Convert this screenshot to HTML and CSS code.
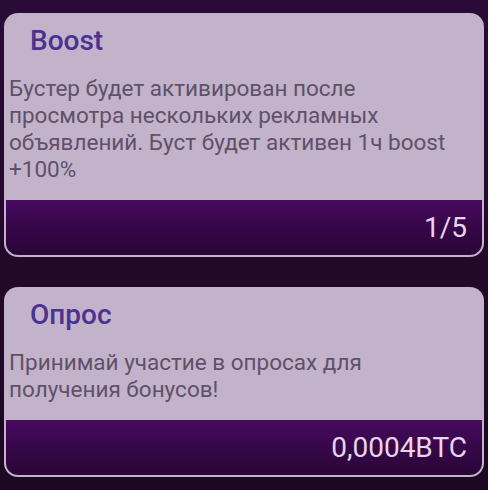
FILE: index.html
```html
<!DOCTYPE html>
<html lang="ru">
<head>
<meta charset="utf-8">
<title>Boost</title>
<link rel="stylesheet" href="styles.css">
</head>
<body>
<main class="list">
  <section class="card">
    <h2 class="card-title">Boost</h2>
    <p class="card-desc">Бустер будет активирован после просмотра нескольких рекламных объявлений. Буст будет активен 1ч boost +100%</p>
    <div class="card-footer"><span class="card-value">1/5</span></div>
  </section>
  <section class="card">
    <h2 class="card-title">Опрос</h2>
    <p class="card-desc">Принимай участие в опросах для получения бонусов!</p>
    <div class="card-footer"><span class="card-value">0,0004BTC</span></div>
  </section>
</main>
</body>
</html>
```
FILE: styles.css
```css
html, body {
  margin: 0;
  padding: 0;
}
body {
  width: 488px;
  height: 490px;
  overflow: hidden;
  background: linear-gradient(180deg, #2a0a37 0%, #220929 55%, #1c0822 100%);
  font-family: Roboto, "Noto Sans", "Liberation Sans", sans-serif;
}
.list {
  display: flex;
  flex-direction: column;
  gap: 30px;
  padding: 13px 4px 0 4px;
}
.card {
  background: #c3b3ca;
  border-radius: 14px;
  overflow: hidden;
  display: flex;
  flex-direction: column;
}
.card-title {
  margin: 0;
  padding: 12px 0 0 26px;
  font-size: 28px;
  line-height: 32px;
  font-weight: 500;
  color: #4a3192;
}
.card-desc {
  margin: 18px 0 17px 0;
  padding: 0 26px 0 5px;
  font-size: 22.5px;
  line-height: 27px;
  font-weight: 400;
  color: #5e5168;
}
.card-footer {
  margin: 0 2px 2px 2px;
  height: 55px;
  border-radius: 0 0 12px 12px;
  background: linear-gradient(180deg, #47095f 0%, #360748 50%, #290537 100%);
  display: flex;
  align-items: center;
  justify-content: flex-end;
  padding-right: 15px;
}
.card-value {
  font-size: 28px;
  line-height: 32px;
  color: #e7d5ed;
}
```
